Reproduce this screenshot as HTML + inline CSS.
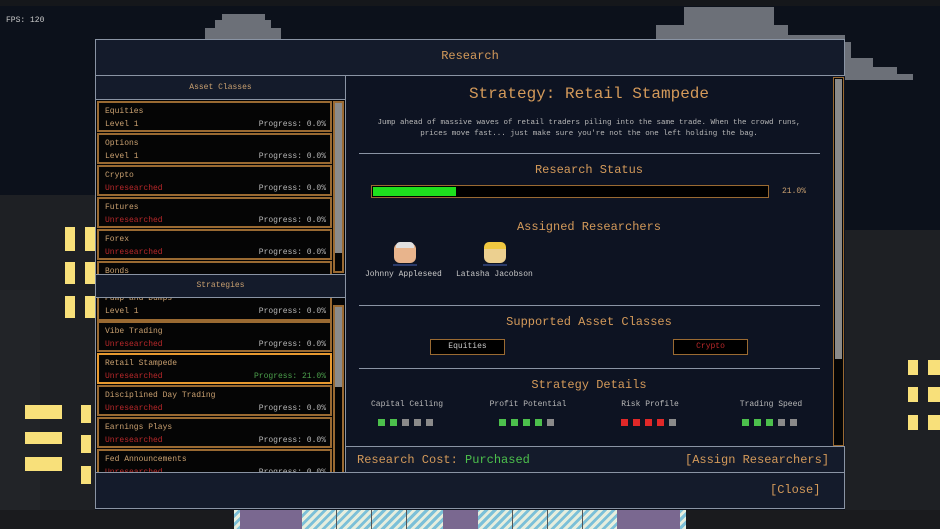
<!DOCTYPE html>
<html><head><style>
*{margin:0;padding:0;box-sizing:border-box}
body{width:940px;height:529px;overflow:hidden;background:#0c111b;position:relative;font-family:"Liberation Mono","DejaVu Sans Mono",monospace}
.a{position:absolute}
.c{position:absolute;background:#6c7078}
.it{position:absolute;left:97px;width:235px;height:31px;background:#050505;border:2px solid #9a6a32;font-size:8px}
.it .n{position:absolute;left:6px;top:4px;color:#c9a070}
.it .s{position:absolute;left:6px;top:17px;color:#c9a070}
.it .s.r{color:#b8282a}
.it .p{position:absolute;right:4px;top:17px;color:#b8b8b8}
.sel{border-color:#e89a30}
.h{position:absolute;left:345px;width:488px;text-align:center;color:#d49a5a;font-size:13px}
.hr{position:absolute;left:359px;width:461px;height:1px;background:#8a94a4}
.sq{display:inline-block;width:7px;height:7px;margin-right:5px}
.g{background:#4cc04c}.x{background:#8a8a8a}.rd{background:#e02828}
.lbl{position:absolute;font-size:8px;color:#b8b8b8;text-align:center;width:120px}
</style></head><body>
<!-- background -->
<div class="a" style="left:0;top:0;width:940px;height:6px;background:#15171b"></div>
<div class="a" style="left:0;top:195px;width:95px;height:334px;background:#1e2024"></div>
<div class="a" style="left:0;top:290px;width:40px;height:239px;background:#222428"></div>
<div class="a" style="left:845px;top:230px;width:95px;height:299px;background:#1e2024"></div>
<!-- clouds -->
<div class="c" style="left:222px;top:14px;width:43px;height:26px"></div>
<div class="c" style="left:215px;top:20px;width:56px;height:20px"></div>
<div class="c" style="left:205px;top:28px;width:76px;height:12px"></div>
<div class="c" style="left:656px;top:25px;width:30px;height:15px"></div>
<div class="c" style="left:684px;top:7px;width:90px;height:33px"></div>
<div class="c" style="left:774px;top:25px;width:14px;height:15px"></div>
<div class="c" style="left:788px;top:35px;width:57px;height:5px"></div>
<div class="c" style="left:845px;top:42px;width:6px;height:38px"></div>
<div class="c" style="left:851px;top:58px;width:22px;height:22px"></div>
<div class="c" style="left:873px;top:67px;width:24px;height:13px"></div>
<div class="c" style="left:897px;top:74px;width:16px;height:6px"></div>
<div class="a" style="left:0;top:510px;width:940px;height:19px;background:#1a1b1e"></div>
<div class="a" style="left:234px;top:510px;width:452px;height:19px;background:repeating-linear-gradient(135deg,#e6eede 0 3px,#7cc0d8 3px 6px)"></div>
<div class="a" style="left:240px;top:510px;width:62px;height:19px;background:#7a6890"></div>
<div class="a" style="left:443px;top:510px;width:35px;height:19px;background:#7a6890"></div>
<div class="a" style="left:617px;top:510px;width:63px;height:19px;background:#7a6890"></div>
<div class="a" style="left:336px;top:510px;width:1px;height:19px;background:#555"></div>
<div class="a" style="left:371px;top:510px;width:1px;height:19px;background:#555"></div>
<div class="a" style="left:406px;top:510px;width:1px;height:19px;background:#555"></div>
<div class="a" style="left:512px;top:510px;width:1px;height:19px;background:#555"></div>
<div class="a" style="left:547px;top:510px;width:1px;height:19px;background:#555"></div>
<div class="a" style="left:582px;top:510px;width:1px;height:19px;background:#555"></div>
<div class="a" style="left:65px;top:227px;width:10px;height:24px;background:#f8e07a"></div>
<div class="a" style="left:85px;top:227px;width:10px;height:24px;background:#f8e07a"></div>
<div class="a" style="left:65px;top:262px;width:10px;height:22px;background:#f8e07a"></div>
<div class="a" style="left:85px;top:262px;width:10px;height:22px;background:#f8e07a"></div>
<div class="a" style="left:65px;top:296px;width:10px;height:22px;background:#f8e07a"></div>
<div class="a" style="left:85px;top:296px;width:10px;height:22px;background:#f8e07a"></div>
<div class="a" style="left:25px;top:405px;width:37px;height:14px;background:#f8e07a"></div>
<div class="a" style="left:25px;top:432px;width:37px;height:12px;background:#f8e07a"></div>
<div class="a" style="left:25px;top:457px;width:37px;height:14px;background:#f8e07a"></div>
<div class="a" style="left:81px;top:405px;width:10px;height:18px;background:#f8e07a"></div>
<div class="a" style="left:81px;top:435px;width:10px;height:18px;background:#f8e07a"></div>
<div class="a" style="left:81px;top:466px;width:10px;height:18px;background:#f8e07a"></div>
<div class="a" style="left:908px;top:360px;width:10px;height:15px;background:#f8e07a"></div>
<div class="a" style="left:928px;top:360px;width:12px;height:15px;background:#f8e07a"></div>
<div class="a" style="left:908px;top:387px;width:10px;height:15px;background:#f8e07a"></div>
<div class="a" style="left:928px;top:387px;width:12px;height:15px;background:#f8e07a"></div>
<div class="a" style="left:908px;top:415px;width:10px;height:15px;background:#f8e07a"></div>
<div class="a" style="left:928px;top:415px;width:12px;height:15px;background:#f8e07a"></div>
<div class="a" style="left:6px;top:16px;font-size:8px;color:#c8c8c8">FPS: 120</div>

<!-- modal -->
<div class="a" style="left:95px;top:39px;width:750px;height:470px;background:#141b2b;border:1px solid #8a94a4"></div>
<div class="a" style="left:95px;top:49px;width:750px;text-align:center;font-size:12px;color:#d49a5a">Research</div>
<div class="a" style="left:95px;top:75px;width:750px;height:1px;background:#8a94a4"></div>
<!-- left -->
<div class="a" style="left:96px;top:76px;width:249px;height:24px;background:#141b2b;border-bottom:1px solid #8a94a4"></div>
<div class="a" style="left:96px;top:83px;width:249px;text-align:center;font-size:8px;color:#c9a070">Asset Classes</div>
<div class="a" style="left:96px;top:100px;width:249px;height:174px;background:#050505"></div>
<div class="it" style="top:101px"><span class="n">Equities</span><span class="s">Level 1</span><span class="p">Progress: 0.0%</span></div>
<div class="it" style="top:133px"><span class="n">Options</span><span class="s">Level 1</span><span class="p">Progress: 0.0%</span></div>
<div class="it" style="top:165px"><span class="n">Crypto</span><span class="s r">Unresearched</span><span class="p">Progress: 0.0%</span></div>
<div class="it" style="top:197px"><span class="n">Futures</span><span class="s r">Unresearched</span><span class="p">Progress: 0.0%</span></div>
<div class="it" style="top:229px"><span class="n">Forex</span><span class="s r">Unresearched</span><span class="p">Progress: 0.0%</span></div>
<div class="it" style="top:261px;height:13px;border-bottom:none;overflow:hidden"><span class="n">Bonds</span></div>
<div class="a" style="left:333px;top:101px;width:11px;height:172px;border:2px solid #9a6a32;background:#050505"></div>
<div class="a" style="left:335px;top:103px;width:7px;height:150px;background:#8a8a8a"></div>
<div class="a" style="left:96px;top:274px;width:249px;height:24px;background:#141b2b;border-top:1px solid #8a94a4;border-bottom:1px solid #8a94a4"></div>
<div class="a" style="left:96px;top:281px;width:249px;text-align:center;font-size:8px;color:#c9a070">Strategies</div>
<div class="a" style="left:96px;top:298px;width:249px;height:174px;background:#050505"></div>
<div class="it" style="top:298px;height:23px;border-top:none;overflow:hidden"><span class="n" style="top:-4px">Pump and Dumps</span><span class="s" style="top:9px">Level 1</span><span class="p" style="top:9px">Progress: 0.0%</span></div>
<div class="it" style="top:321px"><span class="n">Vibe Trading</span><span class="s r">Unresearched</span><span class="p">Progress: 0.0%</span></div>
<div class="it sel" style="top:353px"><span class="n">Retail Stampede</span><span class="s r">Unresearched</span><span class="p" style="color:#4ca04c">Progress: 21.0%</span></div>
<div class="it" style="top:385px"><span class="n">Disciplined Day Trading</span><span class="s r">Unresearched</span><span class="p">Progress: 0.0%</span></div>
<div class="it" style="top:417px"><span class="n">Earnings Plays</span><span class="s r">Unresearched</span><span class="p">Progress: 0.0%</span></div>
<div class="it" style="top:449px;height:23px;border-bottom:none;overflow:hidden"><span class="n">Fed Announcements</span><span class="s r">Unresearched</span><span class="p">Progress: 0.0%</span></div>
<div class="a" style="left:333px;top:305px;width:11px;height:167px;border:2px solid #9a6a32;border-bottom:none;background:#050505"></div>
<div class="a" style="left:335px;top:307px;width:7px;height:80px;background:#8a8a8a"></div>
<div class="a" style="left:345px;top:76px;width:1px;height:396px;background:#8a94a4"></div>
<!-- right -->
<div class="a" style="left:346px;top:76px;width:499px;height:371px;background:#0d1322"></div>
<div class="a" style="left:833px;top:77px;width:11px;height:369px;border:1px solid #9a6a32;background:#050505"></div>
<div class="a" style="left:835px;top:79px;width:7px;height:280px;background:#8a8a8a"></div>
<div class="h" style="top:85px;font-size:16px">Strategy: Retail Stampede</div>
<div class="h" style="top:118px;font-size:7.5px;line-height:11px;color:#b8b8b8">Jump ahead of massive waves of retail traders piling into the same trade. When the crowd runs,<br>prices move fast... just make sure you're not the one left holding the bag.</div>
<div class="hr" style="top:153px"></div>
<div class="h" style="top:163px;font-size:12px">Research Status</div>
<div class="a" style="left:371px;top:185px;width:398px;height:13px;border:1px solid #9a6a32;background:#000"></div>
<div class="a" style="left:373px;top:187px;width:83px;height:9px;background:#1ee01e"></div>
<div class="a" style="left:782px;top:187px;font-size:8px;color:#c9a070">21.0%</div>
<div class="h" style="top:220px;font-size:12px">Assigned Researchers</div>
<div class="a" style="left:394px;top:243px;width:22px;height:20px;border-radius:6px;background:#e8b48c"></div>
<div class="a" style="left:396px;top:242px;width:18px;height:6px;border-radius:4px 4px 0 0;background:#e0e0e0"></div>
<div class="a" style="left:393px;top:264px;width:24px;height:2px;background:#2a3a6a"></div>
<div class="a" style="left:484px;top:243px;width:22px;height:20px;border-radius:6px;background:#ecd090"></div>
<div class="a" style="left:484px;top:242px;width:22px;height:7px;border-radius:5px 5px 0 0;background:#f0c840"></div>
<div class="a" style="left:483px;top:264px;width:24px;height:2px;background:#2a3a6a"></div>
<div class="a" style="left:365px;top:270px;font-size:8px;color:#c8c8c8">Johnny Appleseed</div>
<div class="a" style="left:456px;top:270px;font-size:8px;color:#c8c8c8">Latasha Jacobson</div>
<div class="hr" style="top:305px"></div>
<div class="h" style="top:315px;font-size:12px">Supported Asset Classes</div>
<div class="a" style="left:430px;top:339px;width:75px;height:16px;border:1px solid #9a6a32;background:#000;font-size:8px;color:#c8c8c8;text-align:center;line-height:14px">Equities</div>
<div class="a" style="left:673px;top:339px;width:75px;height:16px;border:1px solid #9a6a32;background:#000;font-size:8px;color:#b8282a;text-align:center;line-height:14px">Crypto</div>
<div class="hr" style="top:368px"></div>
<div class="h" style="top:378px;font-size:12px">Strategy Details</div>
<div class="lbl" style="left:347px;top:400px">Capital Ceiling</div>
<div class="lbl" style="left:468px;top:400px">Profit Potential</div>
<div class="lbl" style="left:590px;top:400px">Risk Profile</div>
<div class="lbl" style="left:711px;top:400px">Trading Speed</div>
<div class="a" style="left:378px;top:419px;font-size:0"><i class="sq g"></i><i class="sq g"></i><i class="sq x"></i><i class="sq x"></i><i class="sq x"></i></div>
<div class="a" style="left:499px;top:419px;font-size:0"><i class="sq g"></i><i class="sq g"></i><i class="sq g"></i><i class="sq g"></i><i class="sq x"></i></div>
<div class="a" style="left:621px;top:419px;font-size:0"><i class="sq rd"></i><i class="sq rd"></i><i class="sq rd"></i><i class="sq rd"></i><i class="sq x"></i></div>
<div class="a" style="left:742px;top:419px;font-size:0"><i class="sq g"></i><i class="sq g"></i><i class="sq g"></i><i class="sq x"></i><i class="sq x"></i></div>
<!-- bottom bar -->
<div class="a" style="left:345px;top:446px;width:500px;height:1px;background:#8a94a4"></div>
<div class="a" style="left:345px;top:472px;width:500px;height:1px;background:#8a94a4"></div>
<div class="a" style="left:95px;top:472px;width:250px;height:1px;background:#8a94a4"></div>
<div class="a" style="left:357px;top:453px;font-size:12px;color:#d49a5a">Research Cost: <span style="color:#4cc04c">Purchased</span></div>
<div class="a" style="left:685px;top:453px;font-size:12px;color:#d49a5a">[Assign Researchers]</div>
<div class="a" style="left:770px;top:483px;font-size:12px;color:#d49a5a">[Close]</div>
</body></html>
